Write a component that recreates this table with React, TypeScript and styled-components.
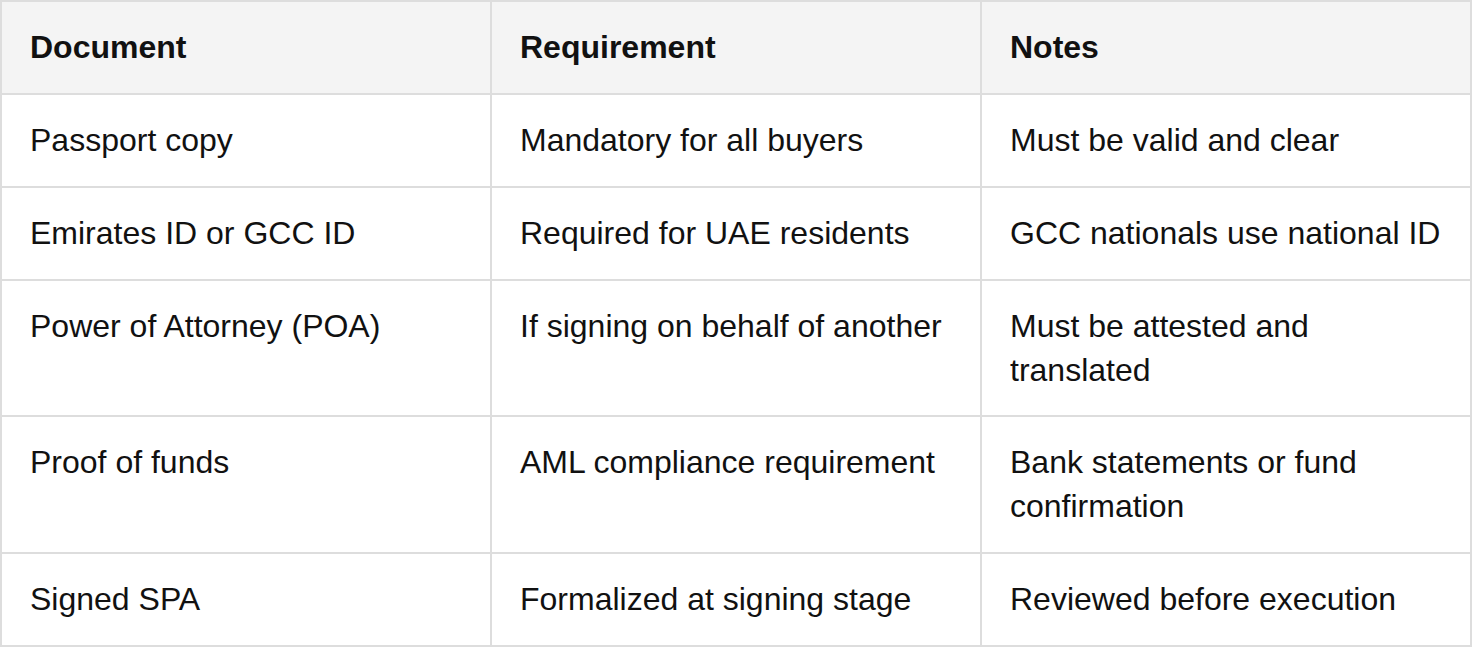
import React from 'react';
import styled, { createGlobalStyle } from 'styled-components';

type Row = {
  document: string;
  requirement: string;
  notes: string;
};

const rows: Row[] = [
  { document: 'Passport copy', requirement: 'Mandatory for all buyers', notes: 'Must be valid and clear' },
  { document: 'Emirates ID or GCC ID', requirement: 'Required for UAE residents', notes: 'GCC nationals use national ID' },
  { document: 'Power of Attorney (POA)', requirement: 'If signing on behalf of another', notes: 'Must be attested and translated' },
  { document: 'Proof of funds', requirement: 'AML compliance requirement', notes: 'Bank statements or fund confirmation' },
  { document: 'Signed SPA', requirement: 'Formalized at signing stage', notes: 'Reviewed before execution' },
];

const GlobalStyle = createGlobalStyle`
  html, body {
    margin: 0;
    padding: 0;
    background: #ffffff;
  }
  body {
    font-family: "Liberation Sans", Arial, Helvetica, sans-serif;
    color: #111111;
  }
`;

const Table = styled.table`
  width: 1472px;
  border-collapse: collapse;
  table-layout: fixed;
  font-size: 32px;
  line-height: 44px;
`;

const HeadCell = styled.th`
  background: #f4f4f4;
  border: 2px solid #dddddd;
  padding: 23px 28px 24px 28px;
  text-align: left;
  font-weight: 700;
  color: #111111;
`;

const Cell = styled.td`
  border: 2px solid #dddddd;
  padding: 23px 28px 23.8px 28px;
  text-align: left;
  vertical-align: top;
  color: #111111;
`;

const App = () => {
  return (
    <>
      <GlobalStyle />
      <Table>
        <thead>
          <tr>
            <HeadCell>Document</HeadCell>
            <HeadCell>Requirement</HeadCell>
            <HeadCell>Notes</HeadCell>
          </tr>
        </thead>
        <tbody>
          {rows.map((row) => (
            <tr key={row.document}>
              <Cell>{row.document}</Cell>
              <Cell>{row.requirement}</Cell>
              <Cell>{row.notes}</Cell>
            </tr>
          ))}
        </tbody>
      </Table>
    </>
  );
};

export default App;
